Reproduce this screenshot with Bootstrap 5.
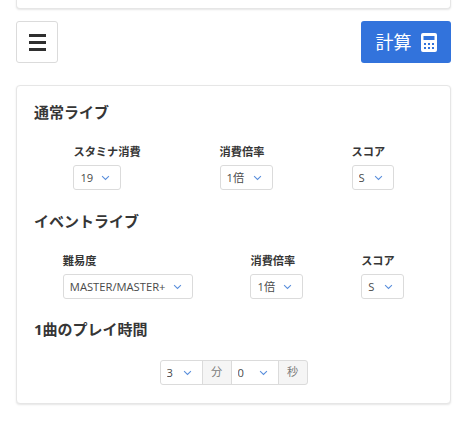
<!DOCTYPE html>
<html lang="ja">
<head>
<meta charset="utf-8">
<title>計算</title>
<link rel="stylesheet" href="https://cdn.jsdelivr.net/npm/bootstrap@5.3.0/dist/css/bootstrap.min.css">
<style>
html,body{height:439px;overflow:hidden}
body{font-family:"Open Sans","Noto Sans CJK JP",sans-serif;color:#363636;background:#fff;padding:0 23px 0 16px}
.panel{border:1px solid #e6e6e6;border-radius:4px;box-shadow:0 1px 2px rgba(0,0,0,.1);background:#fff}
.top-panel{height:10px;margin-top:-1px;border-top:0;border-radius:0 0 4px 4px}
.toolbar{margin-top:12px;height:42px}
.menu-btn{width:42px;height:42px;padding:0;border:1px solid #dbdbdb;border-radius:3px;background:#fff;box-shadow:none}
.menu-btn svg{display:block;margin:auto}
.calc-btn{width:90px;height:42px;padding:0;border:0;border-radius:3px;background:#3273dc;color:#fff;font-size:18px;line-height:1;gap:9px}
.main-panel{margin-top:22px;height:319px;padding:16px 17px 0}
.sec-title{font-size:15px;font-weight:700;line-height:20px;margin:0;color:#363636}
.field-label{font-size:11.2px;font-weight:700;line-height:16px;margin:0 0 5px;color:#363636}
.pick{height:25px;padding:0 22px 0 6px;font-size:11.2px;line-height:23px;color:#4a4a4a;border:1px solid #dbdbdb;border-radius:3px;box-shadow:none;background-size:9px 6px;background-position:right 10px center;background-image:url("data:image/svg+xml,%3Csvg xmlns='http://www.w3.org/2000/svg' viewBox='0 0 10 7'%3E%3Cpath d='M1 1.200l4 4 4-4' fill='none' stroke='%235a8fdc' stroke-width='1.200'/%3E%3C/svg%3E")}
.w-a{width:48px}.w-b{width:53px}.w-c{width:42px}.w-d{width:130px}.w-e{width:43px}
.row-a{margin-top:22px}
.row-b{margin-top:22px}
.sec-gap{margin-top:21px}
.sec-gap2{margin-top:20px}
.time-row{margin-top:21px}
.time-row .pick{border-radius:0}
.time-row .pick:first-child{width:43px;border-radius:3px 0 0 3px}
.time-row .sel-sec{width:48px;margin-left:-1px}
.unit{height:25px;width:30px;margin-left:-1px;font-size:11.2px;color:#7a7a7a;background:#f5f5f5;border:1px solid #dbdbdb}
.unit:last-child{border-radius:0 3px 3px 0}
</style>
</head>
<body>
<div class="panel top-panel"></div>
<div class="toolbar d-flex justify-content-between">
  <button class="btn menu-btn" type="button" aria-label="menu">
    <svg width="17" height="17" viewBox="0 0 17 17"><path d="M0 1.500h17M0 8.500h17M0 15.500h17" stroke="#2f2f2f" stroke-width="3"/></svg>
  </button>
  <button class="btn calc-btn d-flex align-items-center justify-content-center" type="button">計算
    <svg width="16" height="19" viewBox="0 0 16 19"><path fill="#fff" fill-rule="evenodd" d="M2 0h12a2 2 0 0 1 2 2v15a2 2 0 0 1-2 2H2a2 2 0 0 1-2-2V2a2 2 0 0 1 2-2zM2.500 3v4h11V3zM3 10v2h2v-2zm4 0v2h2v-2zm4 0v2h2v-2zM3 14v2h2v-2zm4 0v2h2v-2zm4 0v2h2v-2z"/></svg>
  </button>
</div>
<div class="panel main-panel">
  <h2 class="sec-title">通常ライブ</h2>
  <div class="row-a d-flex justify-content-around">
    <div><p class="field-label">スタミナ消費</p><select class="form-select pick w-a"><option>19</option></select></div>
    <div><p class="field-label">消費倍率</p><select class="form-select pick w-b"><option>1倍</option></select></div>
    <div><p class="field-label">スコア</p><select class="form-select pick w-c"><option>S</option></select></div>
  </div>
  <h2 class="sec-title sec-gap">イベントライブ</h2>
  <div class="row-b d-flex justify-content-around">
    <div><p class="field-label">難易度</p><select class="form-select pick w-d"><option>MASTER/MASTER+</option></select></div>
    <div><p class="field-label">消費倍率</p><select class="form-select pick w-b"><option>1倍</option></select></div>
    <div><p class="field-label">スコア</p><select class="form-select pick w-e"><option>S</option></select></div>
  </div>
  <h2 class="sec-title sec-gap2">1曲のプレイ時間</h2>
  <div class="time-row d-flex justify-content-center">
    <select class="form-select pick"><option>3</option></select>
    <div class="unit d-flex align-items-center justify-content-center">分</div>
    <select class="form-select pick sel-sec"><option>0</option></select>
    <div class="unit d-flex align-items-center justify-content-center">秒</div>
  </div>
</div>
<script src="https://cdn.jsdelivr.net/npm/bootstrap@5.3.0/dist/js/bootstrap.bundle.min.js"></script>
</body>
</html>
